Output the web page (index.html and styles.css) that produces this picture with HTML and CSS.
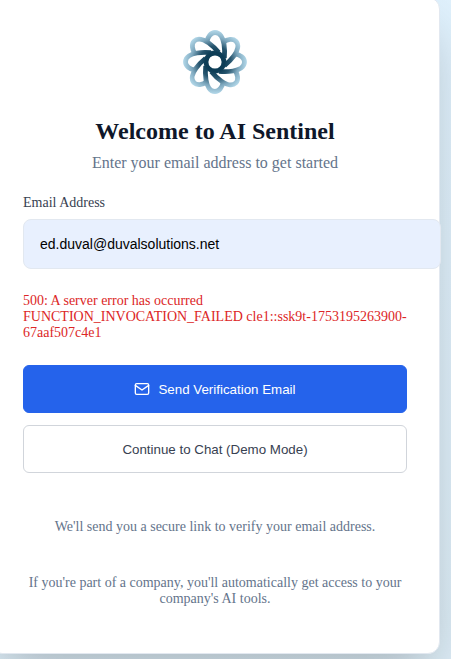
FILE: index.html
```html
<!DOCTYPE html>
<html lang="en">
<head>
<meta charset="utf-8">
<meta name="viewport" content="width=device-width, initial-scale=1">
<title>AI Sentinel</title>
<link rel="stylesheet" href="styles.css">
</head>
<body>
<main class="card">
  <header class="header">
    <svg class="logo" viewBox="-32 -32 64 64" aria-hidden="true">
      <defs>
        <radialGradient id="tone" gradientUnits="userSpaceOnUse" cx="0" cy="0" r="32">
          <stop offset="0.3" stop-color="#0d3d56"/>
          <stop offset="0.5" stop-color="#28566f"/>
          <stop offset="0.75" stop-color="#7fa9bf"/>
          <stop offset="1" stop-color="#b4d9ea"/>
        </radialGradient>
        <path id="petal" d="M-8.200 -20C-7.500 -25 -4 -29.500 0 -29.500C5 -29.500 8 -24 9 -18C9.800 -13 9.800 -9 9.300 -4"/>
      </defs>
      <g fill="none" stroke="url(#tone)" stroke-width="4.800">
        <use href="#petal"/>
        <use href="#petal" transform="rotate(45)"/>
        <use href="#petal" transform="rotate(90)"/>
        <use href="#petal" transform="rotate(135)"/>
        <use href="#petal" transform="rotate(180)"/>
        <use href="#petal" transform="rotate(225)"/>
        <use href="#petal" transform="rotate(270)"/>
        <use href="#petal" transform="rotate(315)"/>
        <circle r="9"/>
      </g>
    </svg>
    <h1 class="title">Welcome to AI Sentinel</h1>
    <p class="subtitle">Enter your email address to get started</p>
  </header>
  <form class="form">
    <label class="label" for="email">Email Address</label>
    <input class="input" id="email" type="email" value="ed.duval@duvalsolutions.net">
    <p class="error" role="alert">500: A server error has occurred FUNCTION_INVOCATION_FAILED cle1::ssk9t-1753195263900-67aaf507c4e1</p>
    <div class="actions">
      <button class="button primary" type="submit">
        <svg class="mail" viewBox="0 0 24 24" aria-hidden="true"><rect x="2" y="4" width="20" height="16" rx="2"/><path d="M22 6.500 12 13.500 2 6.500"/></svg>
        Send Verification Email
      </button>
      <button class="button secondary" type="button">Continue to Chat (Demo Mode)</button>
    </div>
  </form>
  <footer class="notes">
    <p class="note">We'll send you a secure link to verify your email address.</p>
    <p class="note">If you're part of a company, you'll automatically get access to your company's AI tools.</p>
  </footer>
</main>
</body>
</html>
```
FILE: styles.css
```css
body {
  margin: 0;
  min-height: 100vh;
  overflow: hidden;
  display: flow-root;
  background: linear-gradient(160deg, #e0f2fe, #dcecf6);
  font-family: "Liberation Serif", "Times New Roman", serif;
}

.card {
  margin: -3px 11px 0 -10px;
  padding: 32px;
  border: 1px solid #e2e8f0;
  border-radius: 12px;
  background: #fff;
  box-shadow: 0 25px 50px -12px rgba(0, 0, 0, 0.25);
}

.header {
  display: flex;
  flex-direction: column;
  align-items: center;
  text-align: center;
}

.logo {
  width: 64px;
  height: 64px;
}

.title {
  margin: 24px 0 10px;
  font-size: 24px;
  line-height: 26px;
  color: #0f172a;
}

.subtitle {
  margin: 0;
  font-size: 16px;
  line-height: 18px;
  color: #64748b;
}

.form {
  margin-top: 22px;
}

.label {
  display: block;
  margin-bottom: 8px;
  font-size: 14px;
  line-height: 17px;
  color: #374151;
}

.input {
  display: block;
  box-sizing: content-box;
  width: 100%;
  height: 16px;
  padding: 16px;
  border: 1px solid #e2e8f0;
  border-radius: 8px;
  background: #e8f0fe;
  font-family: "Liberation Sans", Arial, sans-serif;
  font-size: 14px;
  color: #000;
}

.error {
  margin: 24px 0;
  font-size: 14px;
  line-height: 16px;
  color: #dc2626;
}

.actions {
  display: flex;
  flex-direction: column;
  gap: 12px;
}

.button {
  display: flex;
  align-items: center;
  justify-content: center;
  gap: 8px;
  height: 48px;
  border: 1px solid #2563eb;
  border-radius: 6px;
  font-family: "Liberation Sans", Arial, sans-serif;
}

.primary {
  background: #2563eb;
  color: #fff;
}

.secondary {
  border-color: #d1d5db;
  background: #fff;
  color: #374151;
}

.mail {
  width: 16px;
  height: 16px;
  fill: none;
  stroke: currentColor;
  stroke-width: 2;
  stroke-linecap: round;
  stroke-linejoin: round;
}

.notes {
  display: flex;
  flex-direction: column;
  gap: 40px;
  padding: 46px 0 14px;
  text-align: center;
}

.note {
  margin: 0;
  font-size: 14px;
  line-height: 16px;
  color: #64748b;
}
```
